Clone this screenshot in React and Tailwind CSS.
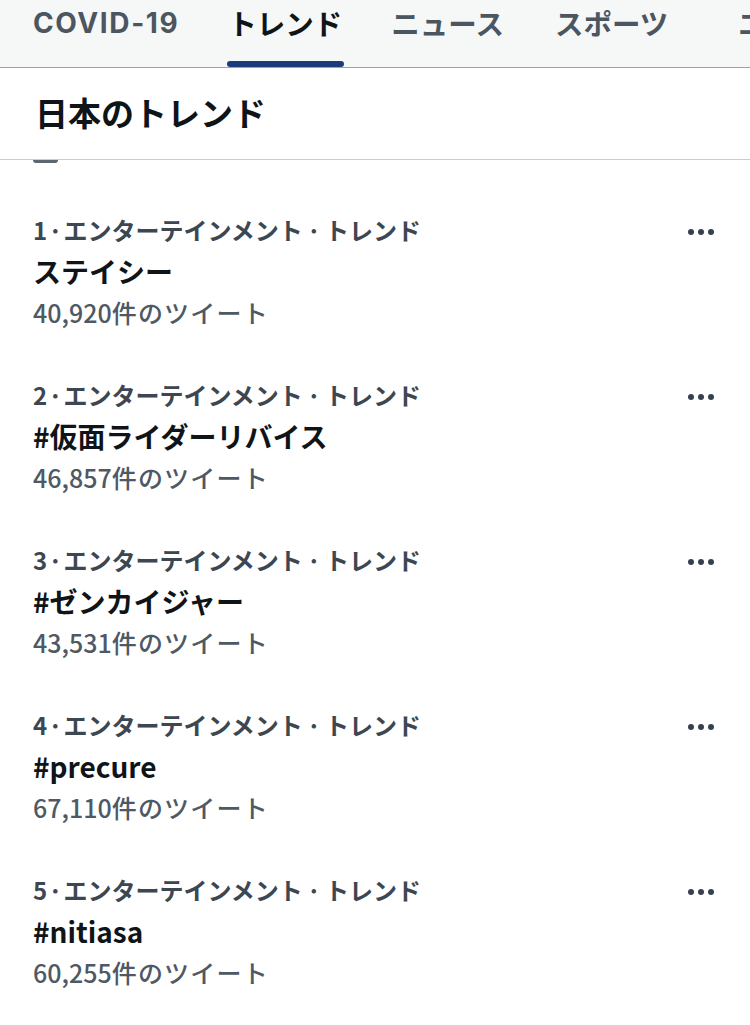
const tabs = [
  { label: 'COVID-19', active: false, cls: 'ml-[33px] font-[Inter,"Noto_Sans_CJK_JP",sans-serif] text-[28px] tracking-[1.6px]' },
  { label: 'トレンド', active: true, cls: 'ml-[49px] text-[28.5px]' },
  { label: 'ニュース', active: false, cls: 'ml-[49px] text-[28.5px]' },
  { label: 'スポーツ', active: false, cls: 'ml-[51px] text-[28.5px]' },
  { label: 'エンターテインメント', active: false, cls: 'ml-[70px] text-[28.5px]' },
];

const trends = [
  { rank: 1, name: 'ステイシー', count: '40,920' },
  { rank: 2, name: '#仮面ライダーリバイス', count: '46,857' },
  { rank: 3, name: '#ゼンカイジャー', count: '43,531' },
  { rank: 4, name: '#precure', count: '67,110' },
  { rank: 5, name: '#nitiasa', count: '60,255' },
];

const font = { fontFamily: '"Noto Sans CJK JP", "Noto Sans", sans-serif' };

function MoreIcon() {
  return (
    <div className="flex items-center gap-[4px]">
      <span className="block w-[6px] h-[6px] rounded-full bg-[#37414b]" />
      <span className="block w-[6px] h-[6px] rounded-full bg-[#37414b]" />
      <span className="block w-[6px] h-[6px] rounded-full bg-[#37414b]" />
    </div>
  );
}

function TrendItem({ trend }) {
  return (
    <div className="flex justify-between pl-[33px] pr-[36px] pb-[49px]">
      <div>
        <div className="text-[24px] leading-[34px] font-bold text-[#3d4751] whitespace-nowrap">
          {trend.rank}
          <span className="mx-[1px]">·</span>
          エンターテインメント
          <span className="mx-[4px]">·</span>
          トレンド
        </div>
        <div className="text-[28px] leading-[48px] font-bold text-[#0f1419]">
          {trend.name}
        </div>
        <div className="text-[25px] leading-[34px] font-medium text-[#4e5964]">
          {trend.count}
          <span className="tracking-[1.2px]">件のツイート</span>
        </div>
      </div>
      <div className="pt-[16px]">
        <MoreIcon />
      </div>
    </div>
  );
}

export default function App() {
  return (
    <div className="w-[750px] h-[1025px] overflow-hidden bg-white" style={font}>
      {/* tab bar */}
      <div className="h-[68px] bg-[#f6f7f7] border-b border-[#9aa3ab] flex overflow-hidden whitespace-nowrap">
        {tabs.map((tab) => (
          <div key={tab.label} className={'relative h-full shrink-0 ' + tab.cls}>
            <div
              className={
                'leading-[46px] font-bold ' +
                (tab.active ? 'text-[#0f1419]' : 'text-[#4b5661]')
              }
            >
              {tab.label}
            </div>
            {tab.active && (
              <div className="absolute left-[-1px] right-[-2px] bottom-0 h-[6px] rounded-full bg-[#1b3c7a]" />
            )}
          </div>
        ))}
      </div>

      {/* header */}
      <div className="h-[92px] flex items-center pl-[35px] border-b border-[#c9cdd1]">
        <h1 className="text-[33px] font-bold text-[#0f1419] leading-none pb-[2px]">日本のトレンド</h1>
      </div>
      <div className="ml-[33px] w-[25px] h-[3px] bg-[#5d6770] rounded-b-sm" />

      {/* list */}
      <div className="pt-[50px]">
        {trends.map((t) => (
          <TrendItem key={t.rank} trend={t} />
        ))}
      </div>
    </div>
  );
}
